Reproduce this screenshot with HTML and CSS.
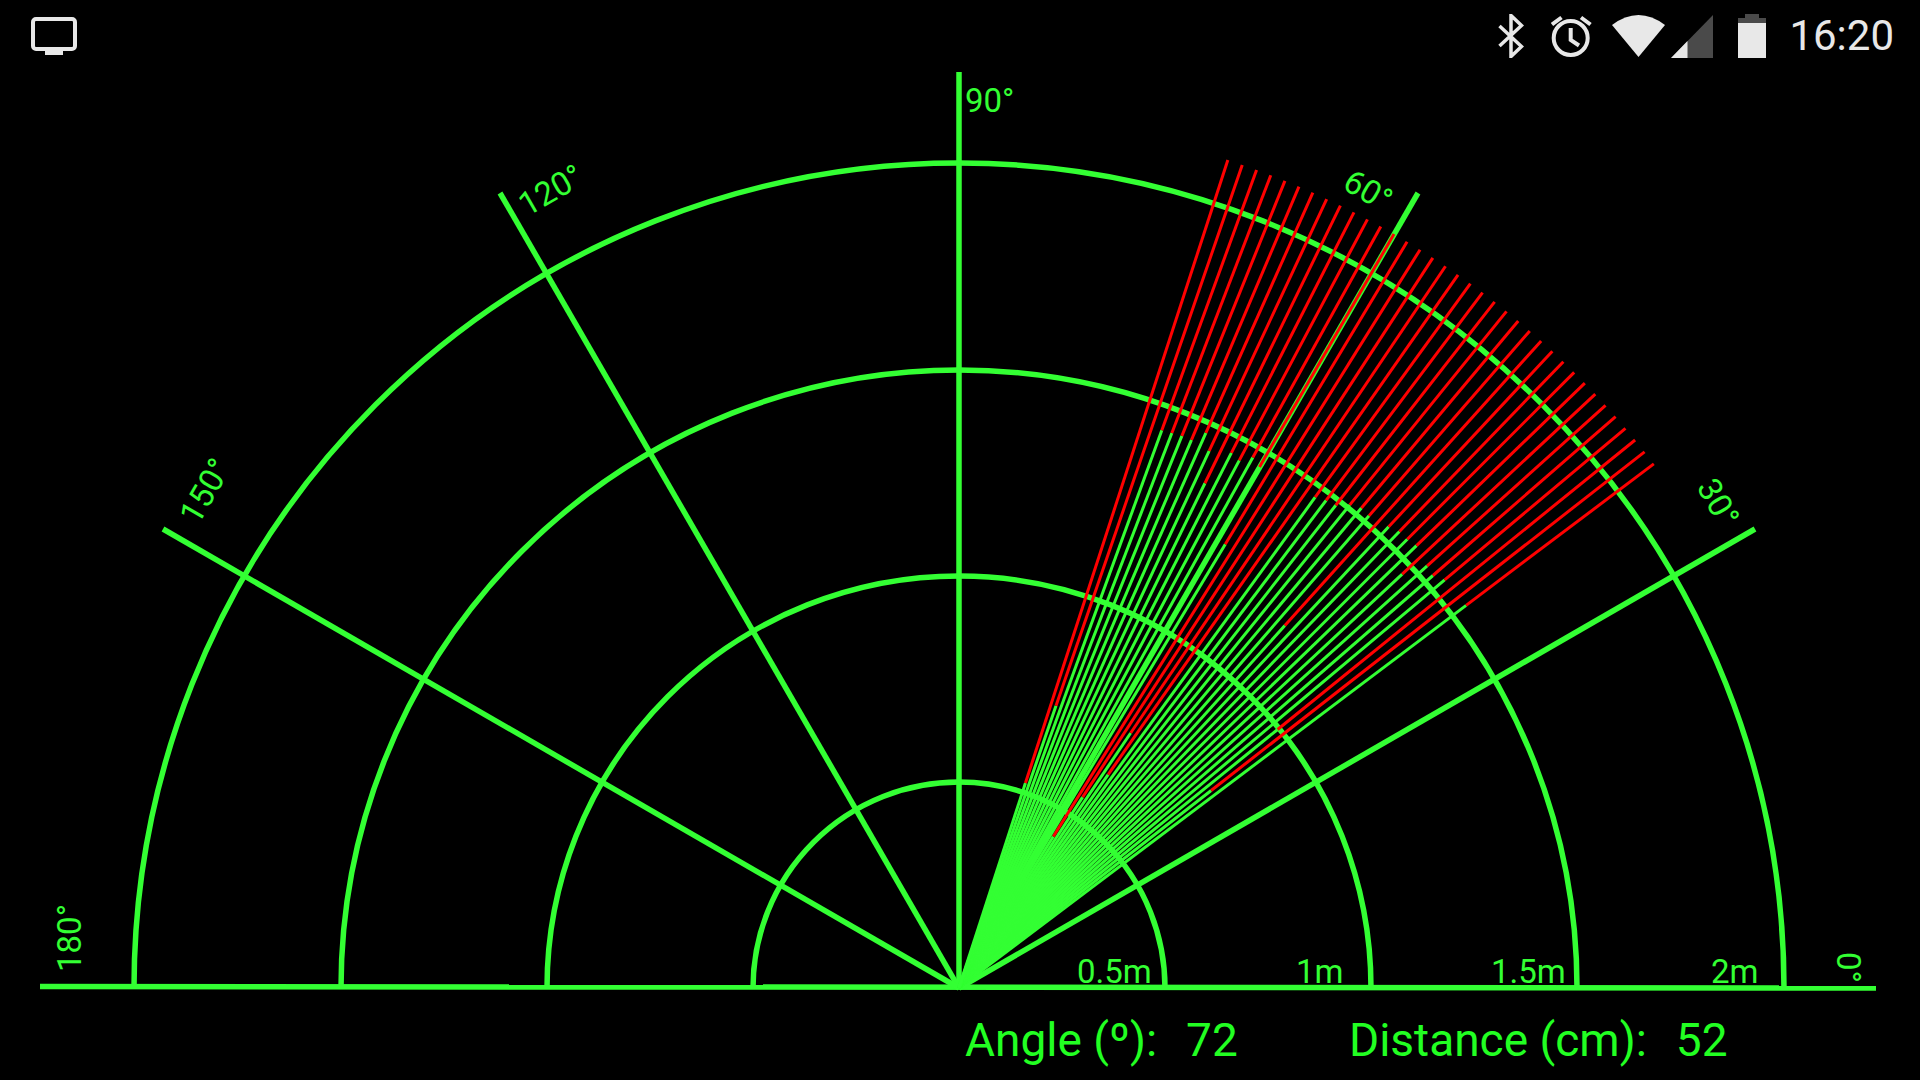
FILE: index.html
```html
<!DOCTYPE html>
<html>
<head>
    <title>Radar</title>
    <link rel="stylesheet" href="styles.css">
</head>
<body>
    <div class="statusbar">
        <svg class="icon-monitor" width="46" height="38" viewBox="0 0 46 38">
            <rect x="2" y="2" width="42" height="30" rx="3"/>
            <path class="fill" d="M14 34h18v4H14z"/>
        </svg>
        <div class="status-right">
            <svg class="icon-bluetooth" width="26" height="44" viewBox="0 0 26 44">
                <path d="M1.500 12 23.500 32.500 13 42.500V1.500L23.500 11.500 1.500 32"/>
            </svg>
            <svg class="icon-alarm" width="41" height="43" viewBox="0 0 41 43">
                <circle cx="19.700" cy="23" r="17"/>
                <path d="M19.700 13V25L28 30.500M1 9.500 10.500 2.500M30 2.500 39.500 9.500"/>
            </svg>
            <svg class="icon-wifi" width="53" height="42" viewBox="0 0 53 42">
                <path class="fill" d="M26.500 42 0 10Q26.500-10 53 10Z"/>
            </svg>
            <svg class="icon-signal" width="42" height="43" viewBox="0 0 42 43">
                <path class="dim" d="M0 43 42 0V43Z"/>
                <path class="fill" d="M0 43 16.500 26V43Z"/>
            </svg>
            <svg class="icon-battery" width="28" height="44" viewBox="0 0 28 44">
                <path class="dim" d="M7 0H21V4H28V9H0V4H7Z"/>
                <path class="fill" d="M0 9H28V44H0Z"/>
            </svg>
            <span class="clock">16:20</span>
        </div>
    </div>

    <svg class="radar" width="1920" height="928" viewBox="0 72 1920 928">
        <!-- range rings -->
        <path class="grid" d="M753 988A206 206 0 0 1 1165 988"/>
        <path class="grid" d="M547 988A412 412 0 0 1 1371 988"/>
        <path class="grid" d="M341 988A618 618 0 0 1 1577 988"/>
        <path class="grid" d="M134 988A825 825 0 0 1 1784 988"/>

        <!-- spokes -->
        <line class="grid" x1="40" y1="986.500" x2="1876" y2="988"/>
        <line class="grid" x1="959" y1="988" x2="959" y2="72"/>
        <line class="grid" x1="959" y1="988" x2="1755" y2="529"/>
        <line class="grid" x1="959" y1="988" x2="1418" y2="193"/>
        <line class="grid" x1="959" y1="988" x2="500" y2="193"/>
        <line class="grid" x1="959" y1="988" x2="163" y2="529"/>

        <!-- sweep: green up to the echo, red beyond it -->
        <g transform="translate(959 987.500)">
            <g transform="rotate(-37)"><line class="near" x2="635"/><line class="far" x1="635" x2="870"/></g>
            <g transform="rotate(-38)"><line class="near" x2="320"/><line class="far" x1="320" x2="870"/></g>
            <g transform="rotate(-39)"><line class="near" x2="410"/><line class="far" x1="410" x2="870"/></g>
            <g transform="rotate(-40)"><line class="near" x2="634"/><line class="far" x1="634" x2="870"/></g>
            <g transform="rotate(-41)"><line class="near" x2="628"/><line class="far" x1="628" x2="870"/></g>
            <g transform="rotate(-42)"><line class="near" x2="630"/><line class="far" x1="630" x2="870"/></g>
            <g transform="rotate(-43)"><line class="near" x2="606"/><line class="far" x1="606" x2="870"/></g>
            <g transform="rotate(-44)"><line class="near" x2="636"/><line class="far" x1="636" x2="870"/></g>
            <g transform="rotate(-45)"><line class="near" x2="634"/><line class="far" x1="634" x2="870"/></g>
            <g transform="rotate(-46)"><line class="near" x2="634"/><line class="far" x1="634" x2="870"/></g>
            <g transform="rotate(-47)"><line class="near" x2="630"/><line class="far" x1="630" x2="870"/></g>
            <g transform="rotate(-48)"><line class="near" x2="487"/><line class="far" x1="487" x2="870"/></g>
            <g transform="rotate(-49)"><line class="near" x2="625"/><line class="far" x1="625" x2="870"/></g>
            <g transform="rotate(-50)"><line class="near" x2="626"/><line class="far" x1="626" x2="870"/></g>
            <g transform="rotate(-51)"><line class="near" x2="621"/><line class="far" x1="621" x2="870"/></g>
            <g transform="rotate(-52)"><line class="near" x2="612"/><line class="far" x1="612" x2="870"/></g>
            <g transform="rotate(-53)"><line class="near" x2="610"/><line class="far" x1="610" x2="870"/></g>
            <g transform="rotate(-54)"><line class="near" x2="606"/><line class="far" x1="606" x2="870"/></g>
            <g transform="rotate(-55)"><line class="near" x2="260"/><line class="far" x1="260" x2="870"/></g>
            <g transform="rotate(-56)"><line class="near" x2="307"/><line class="far" x1="307" x2="870"/></g>
            <g transform="rotate(-57)"><line class="near" x2="227"/><line class="far" x1="227" x2="870"/></g>
            <g transform="rotate(-58)"><line class="near" x2="178"/><line class="far" x1="178" x2="870"/></g>
            <g transform="rotate(-59)"><line class="near" x2="517"/><line class="far" x1="517" x2="870"/></g>
            <g transform="rotate(-60)"><line class="near" x2="601"/><line class="far" x1="601" x2="870"/></g>
            <g transform="rotate(-61)"><line class="near" x2="606"/><line class="far" x1="606" x2="870"/></g>
            <g transform="rotate(-62)"><line class="near" x2="597"/><line class="far" x1="597" x2="870"/></g>
            <g transform="rotate(-63)"><line class="near" x2="600"/><line class="far" x1="600" x2="870"/></g>
            <g transform="rotate(-64)"><line class="near" x2="561"/><line class="far" x1="561" x2="870"/></g>
            <g transform="rotate(-65)"><line class="near" x2="592"/><line class="far" x1="592" x2="870"/></g>
            <g transform="rotate(-66)"><line class="near" x2="607"/><line class="far" x1="607" x2="870"/></g>
            <g transform="rotate(-67)"><line class="near" x2="595"/><line class="far" x1="595" x2="870"/></g>
            <g transform="rotate(-68)"><line class="near" x2="595"/><line class="far" x1="595" x2="870"/></g>
            <g transform="rotate(-69)"><line class="near" x2="594"/><line class="far" x1="594" x2="870"/></g>
            <g transform="rotate(-70)"><line class="near" x2="593"/><line class="far" x1="593" x2="870"/></g>
            <g transform="rotate(-71)"><line class="near" x2="298"/><line class="far" x1="298" x2="870"/></g>
            <g transform="rotate(-72)"><line class="near" x2="215"/><line class="far" x1="215" x2="870"/></g>
        </g>

        <!-- labels -->
        <text class="label" x="1077" y="983">0.5m</text>
        <text class="label" x="1296" y="983">1m</text>
        <text class="label" x="1491" y="983">1.5m</text>
        <text class="label" x="1711" y="983">2m</text>
        <text class="label" transform="translate(1837 952) rotate(90)">0°</text>
        <text class="label" transform="translate(1696 487) rotate(60)">30°</text>
        <text class="label" transform="translate(1341 188) rotate(30)">60°</text>
        <text class="label" x="965" y="112">90°</text>
        <text class="label" transform="translate(527 217) rotate(-30)">120°</text>
        <text class="label" transform="translate(198 526) rotate(-60)">150°</text>
        <text class="label" transform="translate(81 972) rotate(-90)">180°</text>
    </svg>

    <div class="readout">
        <span class="readout-item"><span>Angle (º):</span><span>72</span></span>
        <span class="readout-item"><span>Distance (cm):</span><span>52</span></span>
    </div>
</body>
</html>
```

FILE: styles.css
```css
body {
    margin: 0;
    width: 1920px;
    height: 1080px;
    overflow: hidden;
    background-color: black;
    font-family: Roboto, sans-serif;
}

.statusbar {
    display: flex;
    justify-content: space-between;
    align-items: center;
    height: 72px;
    padding: 0 26px 0 31px;
}

.status-right {
    display: flex;
    align-items: center;
}

.statusbar svg {
    display: block;
    fill: none;
    stroke: #e8e8e8;
}

.statusbar .fill {
    fill: #e8e8e8;
    stroke: none;
}

.statusbar .dim {
    fill: #4a4a4a;
    stroke: none;
}

.icon-monitor {
    stroke-width: 4px;
}

.icon-bluetooth {
    stroke-width: 3.5px;
}

.icon-alarm {
    margin-left: 27px;
    stroke-width: 4px;
}

.icon-wifi {
    margin-left: 20px;
}

.icon-signal {
    margin-left: 6px;
}

.icon-battery {
    margin-left: 25px;
}

.clock {
    margin-left: 23px;
    font-size: 42px;
    line-height: 42px;
    color: #e8e8e8;
}

.radar {
    display: block;
}

.grid {
    fill: none;
    stroke: #33ff33;
    stroke-width: 5.5px;
}

.near {
    stroke: #33ff33;
    stroke-width: 3px;
}

.far {
    stroke: #ff0000;
    stroke-width: 3px;
}

.label {
    font-size: 33px;
    fill: #33ff33;
}

.readout {
    display: flex;
    padding-left: 965px;
    font-size: 46px;
    line-height: 80px;
    color: #22ff22;
}

.readout-item {
    display: flex;
    gap: 29px;
    width: 384px;
}
```
